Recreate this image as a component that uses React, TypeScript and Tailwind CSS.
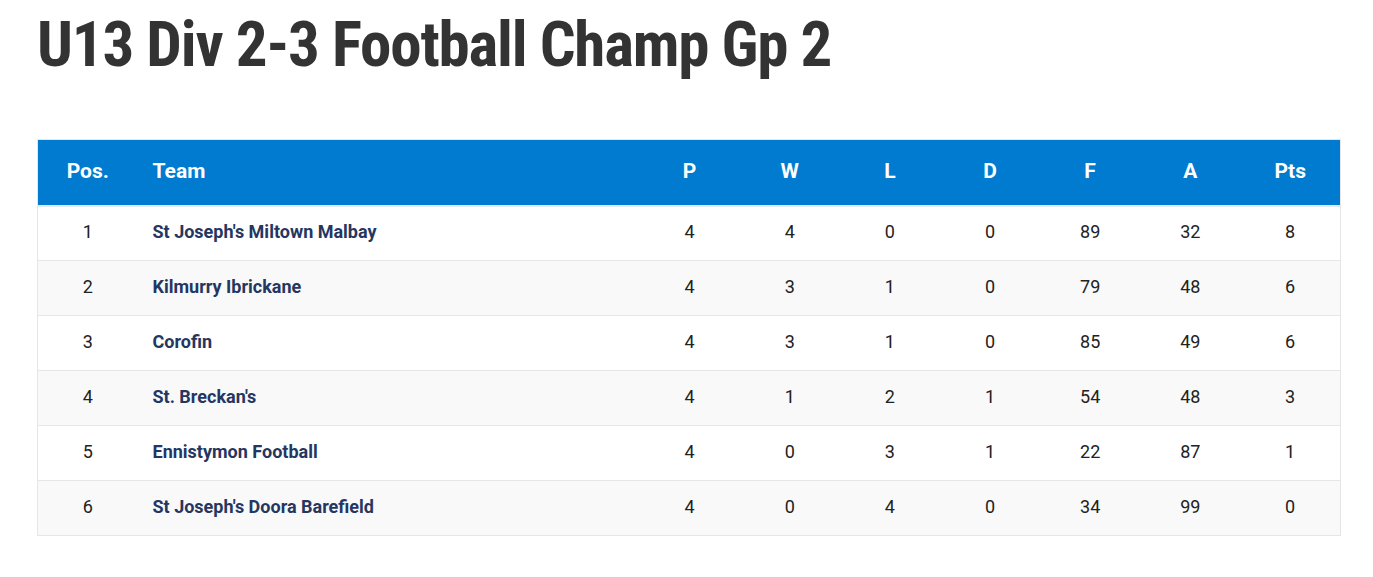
const rows = [
  { pos: 1, team: "St Joseph's Miltown Malbay", p: 4, w: 4, l: 0, d: 0, f: 89, a: 32, pts: 8 },
  { pos: 2, team: "Kilmurry Ibrickane", p: 4, w: 3, l: 1, d: 0, f: 79, a: 48, pts: 6 },
  { pos: 3, team: "Corofin", p: 4, w: 3, l: 1, d: 0, f: 85, a: 49, pts: 6 },
  { pos: 4, team: "St. Breckan's", p: 4, w: 1, l: 2, d: 1, f: 54, a: 48, pts: 3 },
  { pos: 5, team: "Ennistymon Football", p: 4, w: 0, l: 3, d: 1, f: 22, a: 87, pts: 1 },
  { pos: 6, team: "St Joseph's Doora Barefield", p: 4, w: 0, l: 4, d: 0, f: 34, a: 99, pts: 0 },
];

const heads = ["P", "W", "L", "D", "F", "A", "Pts"];

const App = () => {
  return (
    <div className="min-h-screen bg-white px-[37px] pt-[10px] font-['Roboto',sans-serif]">
      <h1 className="text-[63px] leading-[70px] font-bold font-stretch-condensed text-[#333333] tracking-[-1.2px]">
        U13 Div 2-3 Football Champ Gp 2
      </h1>
      <table className="mt-[59px] w-[1304px] border-collapse table-fixed border border-[#e6e6e6]">
        <colgroup>
          <col className="w-[100px]" />
          <col className="w-[502px]" />
          <col />
          <col />
          <col />
          <col />
          <col />
          <col />
          <col />
        </colgroup>
        <thead>
          <tr className="h-[66px] bg-[#007bd0] text-white text-[21px] font-bold">
            <th className="text-center pb-[2px] border-b-2 border-[#e3eaf1]">Pos.</th>
            <th className="text-left pl-[15px] pb-[2px] border-b-2 border-[#e3eaf1]">Team</th>
            {heads.map((h) => (
              <th key={h} className="text-center pb-[2px] border-b-2 border-[#e3eaf1]">
                {h}
              </th>
            ))}
          </tr>
        </thead>
        <tbody>
          {rows.map((r, i) => (
            <tr
              key={r.pos}
              className={`h-[55px] text-[18px] text-[#222222] border-b border-[#e6e6e6] ${i % 2 ? "bg-[#f9f9f9]" : "bg-white"}`}
            >
              <td className="text-center pb-[3px]">{r.pos}</td>
              <td className="pl-[15px] pb-[3px] font-bold text-[#253660]">{r.team}</td>
              <td className="text-center pb-[3px]">{r.p}</td>
              <td className="text-center pb-[3px]">{r.w}</td>
              <td className="text-center pb-[3px]">{r.l}</td>
              <td className="text-center pb-[3px]">{r.d}</td>
              <td className="text-center pb-[3px]">{r.f}</td>
              <td className="text-center pb-[3px]">{r.a}</td>
              <td className="text-center pb-[3px]">{r.pts}</td>
            </tr>
          ))}
        </tbody>
      </table>
    </div>
  );
};

export default App;
